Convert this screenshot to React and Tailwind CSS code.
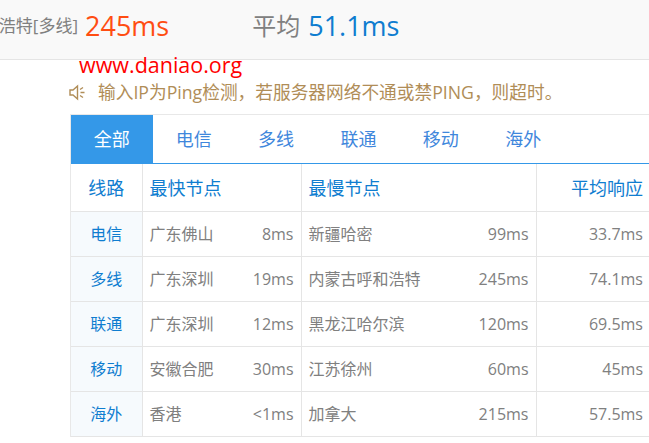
import React from "react";
import { useState } from "react";

const tabs = ["全部", "电信", "多线", "联通", "移动", "海外"];

const rows = [
  { line: "电信", fastName: "广东佛山", fast: "8ms", slowName: "新疆哈密", slow: "99ms", avg: "33.7ms" },
  { line: "多线", fastName: "广东深圳", fast: "19ms", slowName: "内蒙古呼和浩特", slow: "245ms", avg: "74.1ms" },
  { line: "联通", fastName: "广东深圳", fast: "12ms", slowName: "黑龙江哈尔滨", slow: "120ms", avg: "69.5ms" },
  { line: "移动", fastName: "安徽合肥", fast: "30ms", slowName: "江苏徐州", slow: "60ms", avg: "45ms" },
  { line: "海外", fastName: "香港", fast: "<1ms", slowName: "加拿大", slow: "215ms", avg: "57.5ms" },
];

const font = { fontFamily: '"Open Sans", "Noto Sans CJK SC", sans-serif' };

function SpeakerIcon() {
  return (
    <svg width="16" height="17" viewBox="0 0 16 17" fill="none" stroke="#b08d57" strokeWidth="1.4">
      <path d="M1 6h3L8.5 2v13L4 11H1z" />
      <path d="M11 5.5l3-2M11.5 8.5H15.5M11 11.5l3 2" />
    </svg>
  );
}

function App() {
  const [active, setActive] = useState("全部");

  return (
    <div className="relative w-[649px] h-[443px] overflow-hidden bg-white" style={font}>
      <div className="flex items-center h-[60px] pb-[7px] bg-[#f9f9f9] border-b border-[#e5e5e5] whitespace-nowrap">
        <div className="flex justify-end w-[78px] shrink-0 text-[17px] text-[#808080]">内蒙古呼和浩特[多线]</div>
        <span className="ml-[7px] text-[27px] text-[#ff4d12]">245ms</span>
        <span className="ml-[83px] text-[24px] text-[#808080]">平均</span>
        <span className="ml-[8px] text-[27px] text-[#0f7dd0]">51.1ms</span>
      </div>

      <div className="absolute left-[79px] top-[50px] text-[21.5px] leading-[30px] text-[#ff0000]">www.daniao.org</div>

      <div className="flex items-center h-[54px] pt-[11px] pl-[69px] text-[17.7px] text-[#b08d57] whitespace-nowrap">
        <SpeakerIcon />
        <span className="ml-[13px]">输入IP为Ping检测，若服务器网络不通或禁PING，则超时。</span>
      </div>

      <div className="ml-[70px] w-[600px] border-l border-t border-[#e8e8e8]">
        <div className="flex h-[49px] border-b border-[#3498e8]">
          {tabs.map((t) => (
            <button
              key={t}
              onClick={() => setActive(t)}
              className={
                active === t
                  ? "w-[81.5px] text-[18px] bg-[#3498e8] text-white"
                  : "w-[82.4px] text-[18px] text-[#3f87dc]"
              }
            >
              {t}
            </button>
          ))}
        </div>

        <table className="w-[579px] table-fixed border-collapse text-[16px] text-[#808080]">
          <thead>
            <tr className="h-[47px] text-[18px] text-[#0f7dd0] border-b border-[#e5e5e5]">
              <th className="w-[71px] pt-[2px] font-normal text-center">线路</th>
              <th className="w-[159px] px-[7px] pt-[2px] font-normal text-left border-l border-[#e5e5e5]">最快节点</th>
              <th className="w-[235px] px-[7px] pt-[2px] font-normal text-left border-l border-[#e5e5e5]">最慢节点</th>
              <th className="pr-[7px] pt-[2px] font-normal text-right border-l border-[#e5e5e5]">平均响应</th>
            </tr>
          </thead>
          <tbody>
            {rows.map((r) => (
              <tr key={r.line} className="h-[45px] border-b border-[#e5e5e5]">
                <td className="text-center text-[#0f7dd0] bg-[#f6fafd]">{r.line}</td>
                <td className="px-[7px] border-l border-[#e5e5e5]">
                  <div className="flex justify-between">
                    <span>{r.fastName}</span>
                    <span>{r.fast}</span>
                  </div>
                </td>
                <td className="px-[7px] border-l border-[#e5e5e5]">
                  <div className="flex justify-between">
                    <span>{r.slowName}</span>
                    <span>{r.slow}</span>
                  </div>
                </td>
                <td className="pr-[7px] text-right border-l border-[#e5e5e5]">{r.avg}</td>
              </tr>
            ))}
          </tbody>
        </table>
      </div>
    </div>
  );
}

export default App;
